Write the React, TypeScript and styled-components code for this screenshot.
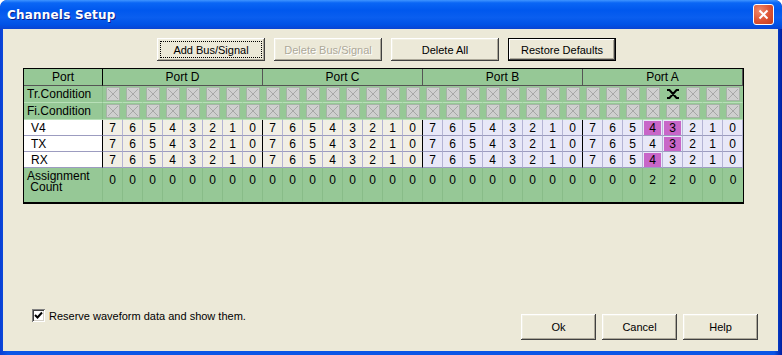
import React from 'react';
import styled, { createGlobalStyle, css } from 'styled-components';

const GlobalStyle = createGlobalStyle`
  html, body {
    margin: 0;
    padding: 0;
    background: #ffffff;
  }
  body {
    font-family: "Liberation Sans", Arial, sans-serif;
    font-size: 11px;
    color: #000;
  }
`;

const Window = styled.div`
  width: 782px;
  height: 355px;
  box-sizing: border-box;
  display: flex;
  flex-direction: column;
  background: linear-gradient(to right, #0a3fd4 0%, #0b55e6 1%, #0b55e6 99%, #001ea0 100%);
  border-radius: 7px 7px 0 0;
  padding: 0 4px 4px 3px;
  overflow: hidden;
`;

const TitleBar = styled.div`
  height: 29px;
  margin: 0 -4px 0 -3px;
  padding: 0 8px 0 7px;
  display: flex;
  align-items: center;
  justify-content: space-between;
  border-radius: 7px 7px 0 0;
  background: linear-gradient(
    to bottom,
    #3f95ff 0%,
    #0a66f5 10%,
    #0058ee 35%,
    #0a5eef 60%,
    #0052e6 85%,
    #0a44d2 100%
  );
`;

const Title = styled.span`
  color: #fff;
  font-family: "DejaVu Sans", "Liberation Sans", sans-serif;
  font-weight: bold;
  font-size: 12px;
  letter-spacing: 0.2px;
  text-shadow: 1px 1px 0 #0a1e8c;
`;

const CloseButton = styled.div`
  width: 21px;
  height: 21px;
  box-sizing: border-box;
  border: 1px solid #fff;
  border-radius: 3px;
  background: radial-gradient(circle at 30% 30%, #f08a6c 0%, #dc5232 55%, #c23d1e 100%);
  display: flex;
  align-items: center;
  justify-content: center;
`;

const Body = styled.div`
  flex: 1;
  background: #ece9d8;
  display: flex;
  flex-direction: column;
  padding: 0 20px 11px 20px;
`;

const TopButtons = styled.div`
  display: flex;
  gap: 9px;
  padding: 9px 0 0 134px;
`;

const Button = styled.button<{ $default?: boolean; $focus?: boolean; $w?: number; $h?: number }>`
  width: ${(p) => p.$w ?? 108}px;
  height: ${(p) => p.$h ?? 23}px;
  box-sizing: border-box;
  padding: 0;
  font-family: "Liberation Sans", Arial, sans-serif;
  font-size: 11px;
  color: #000;
  background: #ece9d8;
  border: none;
  position: relative;
  box-shadow: inset -1px -1px 0 #404040, inset 1px 1px 0 #ffffff, inset -2px -2px 0 #aca899,
    inset 2px 2px 0 #f1efe2;
  ${(p) =>
    p.$default &&
    css`
      box-shadow: inset 0 0 0 1px #000, inset -2px -2px 0 #404040, inset 2px 2px 0 #ffffff,
        inset -3px -3px 0 #aca899;
    `}
  ${(p) =>
    p.$focus &&
    css`
      &::after {
        content: '';
        position: absolute;
        inset: 3px;
        border: 1px dotted #000;
      }
    `}
  &:disabled {
    color: #aca899;
    text-shadow: 1px 1px 0 #fff;
  }
`;

const Grid = styled.div`
  margin-top: 7px;
  width: 721px;
  box-sizing: border-box;
  border: 1px solid #000;
  border-bottom-width: 2px;
  display: grid;
  grid-template-columns: 79px repeat(32, 20px);
  grid-template-rows: 17px 17px 17px 16px 16px 16px 34px;
  font-size: 12px;
`;

type Tone = 'green' | 'beige' | 'lavender' | 'white' | 'purple';

const toneBg: Record<Tone, string> = {
  green: '#96c896',
  beige: '#f1efe5',
  lavender: '#e8e8f8',
  white: '#ffffff',
  purple: '#c866c8',
};

const Cell = styled.div<{ $tone: Tone; $line?: string; $hline?: string; $sep?: boolean; $span?: number; $left?: boolean; $top?: boolean }>`
  box-sizing: border-box;
  background: ${(p) => toneBg[p.$tone]};
  border-right: 1px solid ${(p) => (p.$sep ? '#000' : p.$line ?? '#aaaacc')};
  border-bottom: 1px solid ${(p) => p.$hline ?? p.$line ?? '#aaaacc'};
  grid-column: span ${(p) => p.$span ?? 1};
  display: flex;
  align-items: ${(p) => (p.$top ? 'flex-start' : 'center')};
  justify-content: ${(p) => (p.$left ? 'flex-start' : 'center')};
  padding: ${(p) => (p.$top ? '6px 0 0 0' : '0')};
  padding-left: ${(p) => (p.$left ? '3px' : '0')};
  white-space: nowrap;
  overflow: hidden;
  line-height: 12px;
  &:last-child {
    border-right: none;
  }
`;

const Highlight = styled.span`
  background: #c866c8;
  width: 17px;
  height: 14px;
  display: flex;
  align-items: center;
  justify-content: center;
`;

const NameText = styled.span`
  padding-left: 4px;
`;

const CountLabel = styled.div`
  line-height: 11px;
  font-size: 12px;
  padding-top: 0;
  margin-top: -3px;
  white-space: pre;
`;

const BottomRow = styled.div`
  margin-top: auto;
  display: flex;
  align-items: flex-end;
  justify-content: space-between;
`;

const CheckRow = styled.label`
  display: flex;
  align-items: center;
  gap: 4px;
  margin: 0 0 18px 9px;
  font-size: 11px;
`;

const CheckBox = styled.span`
  width: 13px;
  height: 13px;
  box-sizing: border-box;
  background: #fff;
  box-shadow: inset 1px 1px 0 #808080, inset -1px -1px 0 #ffffff, inset 2px 2px 0 #404040,
    inset -2px -2px 0 #d4d0c8;
  display: flex;
  align-items: center;
  justify-content: center;
`;

const BottomButtons = styled.div`
  display: flex;
  gap: 6px;
`;

const Crossed = () => (
  <svg width="14" height="14" viewBox="0 0 14 14">
    <rect x="0.5" y="0.5" width="13" height="13" fill="#cfcfcf" stroke="#9c9c9c" strokeDasharray="1 1" />
    <path d="M2 2 L12 12 M12 2 L2 12" stroke="#a8a8a8" strokeWidth="1" />
  </svg>
);

const AnyEdge = () => (
  <svg width="14" height="14" viewBox="0 0 14 14">
    <path d="M1 3 H3.5 L10.5 11 H13 M1 11 H3.5 L10.5 3 H13" stroke="#000" strokeWidth="2" fill="none" />
  </svg>
);

const ports = ['Port D', 'Port C', 'Port B', 'Port A'];
const bits = [7, 6, 5, 4, 3, 2, 1, 0];

// which port A bits are assigned per signal
const signals: { name: string; marked: number[] }[] = [
  { name: 'V4', marked: [4, 3] },
  { name: 'TX', marked: [3] },
  { name: 'RX', marked: [4] },
];

export default function App() {
  const greenLine = '#88bc88';

  const conditionRow = (label: string, edgeBit: number | null) => (
    <>
      <Cell $tone="green" $line={greenLine} $hline="#b8e0b8" $left>
        {label}
      </Cell>
      {ports.map((port, pi) =>
        bits.map((b) => (
          <Cell key={port + b} $tone="green" $line="#96c896" $hline="#b8e0b8">
            {pi === 3 && b === edgeBit ? <AnyEdge /> : <Crossed />}
          </Cell>
        ))
      )}
    </>
  );

  return (
    <>
      <GlobalStyle />
      <Window>
        <TitleBar>
          <Title>Channels Setup</Title>
          <CloseButton>
            <svg width="11" height="11" viewBox="0 0 11 11">
              <path d="M1.5 1.5 L9.5 9.5 M9.5 1.5 L1.5 9.5" stroke="#fff" strokeWidth="2" />
            </svg>
          </CloseButton>
        </TitleBar>
        <Body>
          <TopButtons>
            <Button $focus>Add Bus/Signal</Button>
            <Button disabled>Delete Bus/Signal</Button>
            <Button>Delete All</Button>
            <Button $default>Restore Defaults</Button>
          </TopButtons>

          <Grid>
            <Cell $tone="green" $sep $hline="#555">
              Port
            </Cell>
            {ports.map((p) => (
              <Cell key={p} $tone="green" $span={8} $line="#555" $hline="#555">
                {p}
              </Cell>
            ))}

            {conditionRow('Tr.Condition', 3)}
            {conditionRow('Fi.Condition', null)}

            {signals.map((s) => (
              <React.Fragment key={s.name}>
                <Cell $tone="white" $sep $hline="#9c9cc0" $left>
                  <NameText>{s.name}</NameText>
                </Cell>
                {ports.map((port, pi) =>
                  bits.map((b) => {
                    const marked = pi === 3 && s.marked.includes(b);
                    return (
                      <Cell
                        key={port + b}
                        $tone={pi < 2 ? 'beige' : 'lavender'}
                        $line="#b4b4d4"
                        $hline="#9c9cc0"
                        $sep={b === 0 && pi < 3}
                      >
                        {marked ? <Highlight>{b}</Highlight> : b}
                      </Cell>
                    );
                  })
                )}
              </React.Fragment>
            ))}

            <Cell $tone="green" $line={greenLine} $hline="#96c896" $left $top>
              <CountLabel>{'Assignment\n Count'}</CountLabel>
            </Cell>
            {ports.map((port, pi) =>
              bits.map((b) => (
                <Cell key={port + b} $tone="green" $line={greenLine} $hline="#96c896" $top>
                  {pi === 3 && (b === 4 || b === 3) ? 2 : 0}
                </Cell>
              ))
            )}
          </Grid>

          <BottomRow>
            <CheckRow>
              <CheckBox>
                <svg width="9" height="9" viewBox="0 0 9 9">
                  <path d="M1 4 L3.5 6.5 L8 1.5" stroke="#000" strokeWidth="2" fill="none" />
                </svg>
              </CheckBox>
              Reserve waveform data and show them.
            </CheckRow>
            <BottomButtons>
              <Button $w={75} $h={26}>Ok</Button>
              <Button $w={75} $h={26}>Cancel</Button>
              <Button $w={75} $h={26}>Help</Button>
            </BottomButtons>
          </BottomRow>
        </Body>
      </Window>
    </>
  );
}
